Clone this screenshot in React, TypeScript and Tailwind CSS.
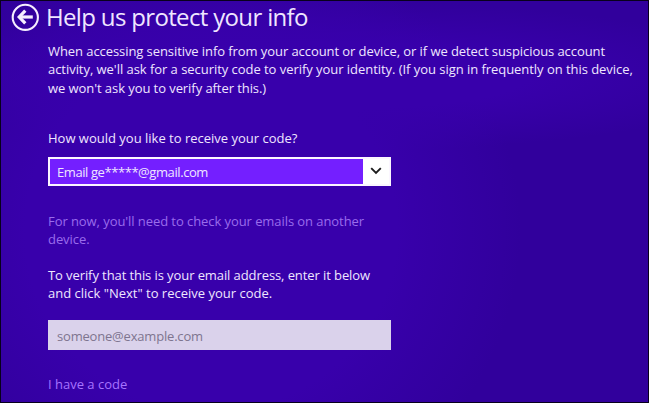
function BackButton() {
  return (
    <button aria-label="Back" className="mt-[2px] h-7 w-7 shrink-0">
      <svg width="28" height="28" viewBox="0 0 28 28" fill="none" stroke="#f6eeff">
        <circle cx="14.3" cy="14.3" r="12.6" strokeWidth="2.1" />
        <path d="M8 14H21.8" strokeWidth="3.2" />
        <path d="M14.3 7.6L8.2 14L14.3 20.4" strokeWidth="3.2" />
      </svg>
    </button>
  );
}

function CodeSelect() {
  return (
    <div className="mt-[10px] flex h-[29px] w-[343px] border-2 border-[#fbf6ff] bg-white">
      <div className="flex-1 bg-[#741fff] pl-[7px] leading-[26px] tracking-[-0.42px]">
        Email ge*****@gmail.com
      </div>
      <div className="flex w-[26px] items-center justify-center">
        <svg width="12" height="8" viewBox="0 0 12 8" fill="none" stroke="#1c1c1c" strokeWidth="1.9">
          <path d="M1.2 1.2L6 6L10.8 1.2" />
        </svg>
      </div>
    </div>
  );
}

export default function App() {
  return (
    <div className="h-[403px] w-[649px] overflow-hidden border border-[#08001c] bg-[#31009c] bg-[radial-gradient(ellipse_310px_300px_at_210px_230px,#3800ab_0%,#3800ab_60%,transparent_100%),radial-gradient(ellipse_440px_75px_at_330px_75px,#3800ab_0%,#3800ab_45%,transparent_100%)] font-['Open_Sans','Noto_Sans',sans-serif] text-[13px] leading-[18px] whitespace-nowrap text-[#efe6ff]">
      <header className="flex pl-[10px]">
        <BackButton />
        <h1 className="ml-[7px] text-[24px] leading-[32px] tracking-[-0.66px]">Help us protect your info</h1>
      </header>
      <main className="ml-[47px]">
        <p className="mt-[9px] leading-[18.3px]">
          <span className="block tracking-[-0.075px]">When accessing sensitive info from your account or device, or if we detect suspicious account</span>
          <span className="block tracking-[-0.045px]">activity, we'll ask for a security code to verify your identity. (If you sign in frequently on this device,</span>
          <span className="block tracking-[-0.07px]">we won't ask you to verify after this.)</span>
        </p>
        <p className="mt-[32px]">How would you like to receive your code?</p>
        <CodeSelect />
        <p className="mt-[26px] tracking-[-0.07px] text-[#9a6cec]">
          For now, you'll need to check your emails on another
          <br />
          device.
        </p>
        <p className="mt-[18px]">
          <span className="block tracking-[-0.09px]">To verify that this is your email address, enter it below</span>
          <span className="block">and click "Next" to receive your code.</span>
        </p>
        <div className="mt-[18px] h-[30px] w-[343px] bg-[#dad2eb] pl-[9px] leading-[32px] tracking-[-0.19px] text-[#7e758f]">
          someone@example.com
        </div>
        <a className="mt-[25px] block text-[#a774ff]">I have a code</a>
      </main>
    </div>
  );
}
